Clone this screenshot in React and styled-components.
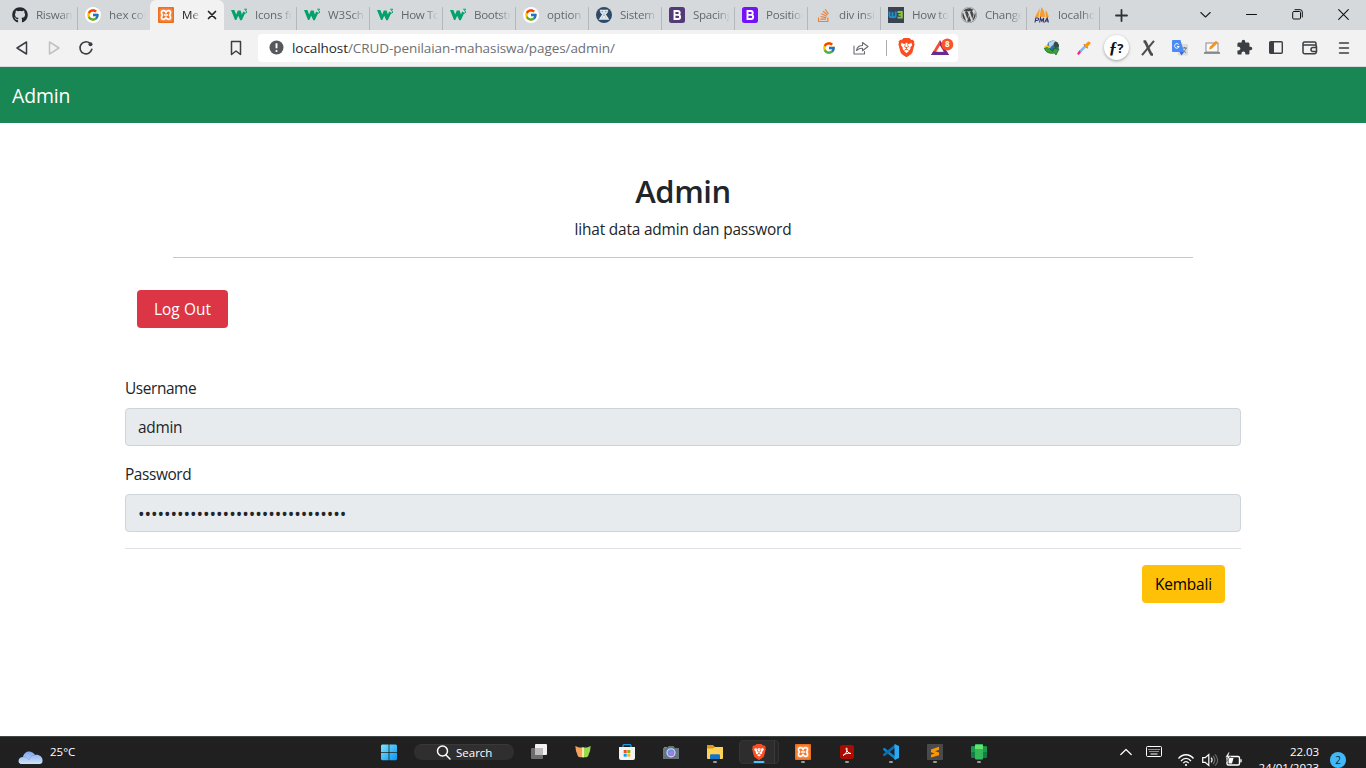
import React from "react";
import styled, { createGlobalStyle } from "styled-components";
import { FcGoogle } from "react-icons/fc";
import { FaGithub, FaWordpress, FaStackOverflow } from "react-icons/fa";
import { SiBrave } from "react-icons/si";
import { MdExtension } from "react-icons/md";

const Global = createGlobalStyle`
  * { box-sizing: border-box; }
  body { margin: 0; background: #fff; overflow: hidden; }
  svg { display: block; flex: none; }
`;

const Screen = styled.div`
  width: 1366px;
  height: 768px;
  display: flex;
  flex-direction: column;
  overflow: hidden;
  font-family: "Open Sans", "Noto Sans", sans-serif;
  color: #212529;
`;

/* ---------- tab strip ---------- */
const TabStrip = styled.div`
  height: 30px;
  flex: none;
  display: flex;
  padding-left: 5px;
  background: #d5d9dc;
`;

const Tab = styled.div`
  width: 73px;
  height: 30px;
  flex: none;
  display: flex;
  align-items: center;
  padding-left: 7px;
  border-radius: ${(p) => (p.$active ? "6px 6px 0 0" : "0")};
  background: ${(p) =>
    p.$active
      ? "#f2f2f2"
      : p.$edge
        ? "none"
        : "linear-gradient(#b5b8ba, #b5b8ba) right 7px / 1px 23px no-repeat"};
  ${(p) => p.$active && "margin: 0 0 0 -1px; width: 74px; padding-left: 8px;"}
`;

const Favicon = styled.span`
  width: 16px;
  height: 16px;
  flex: none;
  display: flex;
  align-items: center;
  justify-content: center;
`;

const TabTitle = styled.span`
  width: ${(p) => (p.$active ? "18px" : "37px")};
  margin-left: 8px;
  overflow: hidden;
  white-space: nowrap;
  font-size: 11.6px;
  line-height: 18px;
  letter-spacing: ${(p) => p.$ls || 0}px;
  color: ${(p) => (p.$active ? "#222" : "#63686c")};
  mask-image: linear-gradient(to right, #000 ${(p) => (p.$active ? "55%" : "65%")}, transparent);
`;

const CloseTab = styled.span`
  margin-left: 7px;
`;

const WindowButton = styled.div`
  width: 46px;
  height: 30px;
  display: flex;
  align-items: center;
  justify-content: center;
`;

const WindowButtons = styled.div`
  height: 28px;
  display: flex;
  align-items: center;
  margin-left: auto;
`;

const NewTab = styled.div`
  width: 43px;
  display: flex;
  align-items: center;
  justify-content: center;
`;

/* ---------- toolbar ---------- */
const Toolbar = styled.div`
  height: 37px;
  flex: none;
  display: flex;
  align-items: center;
  padding: 0 6px 1px;
  background: #f2f2f2;
  border-bottom: 1px solid #d8dadb;
`;

const ToolButton = styled.div`
  width: ${(p) => p.$w || 32}px;
  height: 32px;
  flex: none;
  display: flex;
  align-items: center;
  justify-content: center;
`;

const BookmarkButton = styled(ToolButton)`
  margin-left: 118px;
`;

const RewardsButton = styled(ToolButton)`
  padding-left: 6px;
`;

const AddressBar = styled.div`
  width: 700px;
  height: 28px;
  margin-left: 6px;
  padding-left: 11px;
  display: flex;
  align-items: center;
  background: #fff;
  border-radius: 4px;
`;

const Url = styled.span`
  flex: 1;
  margin-left: 8px;
  white-space: nowrap;
  font-size: 13.5px;
  letter-spacing: -0.07px;
  color: #6c7074;
  b { font-weight: 400; color: #25282b; }
`;

const Divider = styled.span`
  width: 1px;
  height: 16px;
  margin: 0 3px 0 9px;
  background: #aaadb0;
`;

const Extensions = styled.div`
  display: flex;
  margin-left: auto;
`;

const RoundBadge = styled.div`
  width: 25px;
  height: 25px;
  border-radius: 50%;
  background: #fff;
  box-shadow: 0 1px 3px rgba(0, 0, 0, 0.35);
  display: flex;
  align-items: center;
  justify-content: center;
  font: italic 700 17px/24px "Liberation Serif", serif;
  color: #111;
  span { font: 700 13px/24px "Open Sans", sans-serif; }
`;

/* ---------- page ---------- */
const Navbar = styled.nav`
  height: 56px;
  flex: none;
  padding-left: 12px;
  background: #198754;
  color: #fff;
  font-size: 19.4px;
  line-height: 58px;
  letter-spacing: ${(p) => p.$ls}px;
`;

const Page = styled.main`
  height: 613px;
  flex: none;
  display: flex;
  flex-direction: column;
  align-items: center;
  font-size: 15.4px;
`;

const Title = styled.h2`
  margin: 48px 0 0;
  height: 38px;
  font-size: 31px;
  line-height: 40px;
  font-weight: 600;
  letter-spacing: ${(p) => p.$ls}px;
`;

const Subtitle = styled.p`
  margin: 8px 0 0;
  height: 24px;
  line-height: 25px;
  letter-spacing: ${(p) => p.$ls}px;
`;

const TitleRule = styled.div`
  width: 1020px;
  height: 1px;
  margin-top: 16px;
  background: #c7c8c9;
`;

const Content = styled.section`
  width: 1116px;
  display: flex;
  flex-direction: column;
`;

const Button = styled.button`
  width: ${(p) => p.$w}px;
  height: 38px;
  padding: 0;
  border: 0;
  border-radius: 4px;
  font: inherit;
  letter-spacing: ${(p) => p.$ls}px;
  color: ${(p) => p.$color};
  background: ${(p) => p.$bg};
`;

const LogoutRow = styled.div`
  margin: 32px 0 48px 12px;
  height: 38px;
`;

const Label = styled.label`
  height: 24px;
  line-height: 26px;
  margin-bottom: 8px;
  letter-spacing: ${(p) => p.$ls}px;
`;

const Field = styled.div`
  height: 38px;
  margin-bottom: 16px;
  padding-left: 12px;
  line-height: 38px;
  border: 1px solid #ced4da;
  border-radius: 4px;
  background: #e8ebee;
  letter-spacing: ${(p) => p.$ls}px;
`;

const PasswordField = styled(Field)`
  font-size: 17.5px;
`;

const FooterRow = styled.div`
  display: flex;
  justify-content: flex-end;
  padding: 16px 16px 0 0;
  border-top: 1px solid #dee2e6;
`;

/* ---------- taskbar ---------- */
const Taskbar = styled.footer`
  height: 32px;
  flex: none;
  display: flex;
  overflow: hidden;
  color: #fff;
  background: #202020;
  border-top: 1px solid #414543;
`;

const Weather = styled.div`
  width: 367px;
  flex: none;
  display: flex;
  padding: 14px 0 0 18px;
  font-size: 11.5px;
  span { margin: -7px 0 0 7px; line-height: 16px; }
`;

const TaskItem = styled.div`
  position: relative;
  width: 44px;
  height: 31px;
  flex: none;
  display: flex;
  justify-content: center;
  padding-top: 7px;
  &::after {
    content: "";
    position: absolute;
    left: 50%;
    top: 23.5px;
    width: ${(p) => (p.$current ? 11 : 4)}px;
    height: 2.5px;
    border-radius: 2px;
    transform: translateX(-50%);
    background: ${(p) => (p.$current ? "#4cc2ff" : "#9a9a9a")};
    display: ${(p) => (p.$running || p.$current ? "block" : "none")};
  }
`;

const CurrentFrame = styled.div`
  width: 40px;
  height: 24px;
  margin: 3px 2px 0;
  border-radius: 4px;
  border: 1px solid #343434;
  background: linear-gradient(90deg, #2d2d2d 34px, #3a3a3a 34px, #3a3a3a 35px, #262626 35px);
  display: flex;
  justify-content: center;
  ${TaskItem} { height: 20px; padding-top: 3px; margin-left: -1px; }
  ${TaskItem}::after { top: 19.5px; }
`;

const SearchPill = styled.div`
  width: 100px;
  height: 16px;
  margin: 7px 3px 0 3px;
  padding-left: 22px;
  display: flex;
  align-items: center;
  gap: 5px;
  border-radius: 8px;
  background: #2f2f2f;
  border-top: 1px solid #393939;
  font-size: 11.5px;
`;

const Tray = styled.div`
  margin-left: auto;
  width: 252px;
  flex: none;
  display: flex;
`;

const TrayIcon = styled.span`
  width: ${(p) => p.$w}px;
  height: 16px;
  flex: none;
  margin-top: ${(p) => p.$top}px;
  display: flex;
  align-items: center;
  justify-content: center;
`;

const Clock = styled.div`
  width: 69px;
  flex: none;
  padding-top: 7px;
  text-align: right;
  font-size: 11.6px;
  line-height: 16px;
  letter-spacing: -0.1px;
`;

const Count = styled.div`
  width: 16px;
  height: 16px;
  flex: none;
  margin: 15px 0 0 11px;
  border-radius: 50%;
  background: #41b9f8;
  color: #10242f;
  font-size: 10px;
  line-height: 16px;
  text-align: center;
`;

/* ---------- drawings ---------- */
const GoogleFav = () => (
  <svg width="16" height="16" viewBox="0 0 16 16">
    <circle cx="8" cy="8" r="8" fill="#fff" />
    <g transform="translate(1.200 1.200)"><FcGoogle size={13.6} /></g>
  </svg>
);

const W3Fav = () => (
  <svg width="17" height="16" viewBox="0 0 17 16">
    <path d="M0 3h3.400l1.800 4.600L6.800 3.500h2.800l1.300 4.100L12.200 4.500l2 1.600-3.400 7.200H9.300L7.200 8.700 5.300 13H4z" fill="#04a26a" />
    <path d="M13.200 2.200h2.500l-1.300 1.500c1.700.1 1.700 2.500-.1 2.500-.7 0-1.100-.3-1.400-.8" fill="none" stroke="#04a26a" />
  </svg>
);

const XamppIcon = () => (
  <svg width="16" height="16" viewBox="0 0 16 16">
    <rect width="16" height="16" rx="1" fill="#ec6f22" />
    <rect x="1.500" y="1.500" width="13" height="13" rx="2" fill="#f58b45" />
    <path d="M3.500 5.500C3.500 2.800 7 3.400 8 5.300 9 3.400 12.500 2.800 12.500 5.500c0 1.300-.8 1.700-.8 2.500s.8 1.200.8 2.500c0 2.700-3.500 2.100-4.500.2-1 1.900-4.500 2.500-4.500-.2 0-1.300.8-1.700.8-2.500s-.8-1.200-.8-2.500z" fill="#f07a30" stroke="#fff" strokeWidth="1.700" />
    <path d="M5.800 8h4.400" stroke="#fff" strokeWidth="1.500" />
  </svg>
);

const BootstrapFav = ({ color }) => (
  <svg width="16" height="16" viewBox="0 0 16 16">
    <rect width="16" height="16" rx="2.500" fill={color} />
    <path d="M5.500 4h3.300a1.900 1.900 0 0 1 0 3.900H5.500zM5.500 7.900h3.600a2.050 2.050 0 0 1 0 4.100H5.500z" fill="none" stroke="#fff" strokeWidth="1.900" />
  </svg>
);

const SistemFav = () => (
  <svg width="16" height="16" viewBox="0 0 16 16">
    <circle cx="8" cy="8" r="8" fill="#2d4b69" />
    <path d="M3.800 3.500h8.400M4.500 4.500l2.500 3-3 4.500h8l-3-4.500 2.500-3" fill="#8ea3b6" stroke="#e4e9ee" strokeWidth="1.500" />
    <circle cx="8" cy="5.300" r="1.400" fill="#e4e9ee" />
    <circle cx="8" cy="10.300" r="1.500" fill="#e4e9ee" />
  </svg>
);

const W3DarkFav = () => (
  <svg width="16" height="16" viewBox="0 0 16 16">
    <rect width="16" height="16" fill="#3b4251" />
    <path d="M1.500 4.500v4.200c0 2 3 2 3 0V5m0 3.700c0 2 3.200 2 3.200 0V4.500" fill="none" stroke="#1893d1" strokeWidth="1.900" />
    <path d="M9.500 5h4.300v5.600H9.500M10.500 7.800h3" fill="none" stroke="#8dc63f" strokeWidth="1.900" />
  </svg>
);

const PmaFav = () => (
  <svg width="16" height="16" viewBox="0 0 16 16">
    <path d="M6 1 4.500 10H1zM7.300 0c2.400 2.500 3.600 6 3.600 10H5.600zM11.500 3c1.800 2 2.800 4.300 3.200 7h-3z" fill="#f89c2a" />
    <path d="M1 15.500l.8-4.500h1.700c1.700 0 1.300 2.500-.4 2.500H1.600M5.600 15.500l.9-4.500 1.200 3 2-3-.5 4.500M10.500 15.500l2.700-4.500 1.200 4.500M11.500 14h2.500" fill="none" stroke="#33356f" strokeWidth="1.100" />
  </svg>
);

const BraveIcon = ({ size }) => (
  <svg width={size} height={size} viewBox="0 0 24 24">
    <path d="M12 1h4l5 4-1 10-4 6-4 3-4-3-4-6L3 5l5-4z" fill="#fb4d20" />
    <path d="M6 6l3 .6L12 6l3 .6L18 6l1.500 3-2.500 4.500-1 2.500-4 3.500L8 16l-1-2.500L4.500 9z" fill="#fff" />
    <SiBrave size={24} color="#fb4d20" />
  </svg>
);

const Line = ({ w = 16, h = 16, d, c = "#3b3f43", sw = 1.4, fill = "none" }) => (
  <svg width={w} height={h} viewBox={`0 0 ${w} ${h}`} fill={fill} stroke={c} strokeWidth={sw} strokeLinejoin="round" strokeLinecap="round">
    <path d={d} />
  </svg>
);

const RewardsIcon = () => (
  <svg width="26" height="20" viewBox="0 0 26 20">
    <path d="M10 2 1 17h4.500L10 9.500z" fill="#f0502f" />
    <path d="M10 2l9 15h-4.500L10 9.500z" fill="#9e1f63" />
    <path d="M1 17h18l-2.200-3.500H3.200z" fill="#662d91" />
    <path d="M10 7.500l3.800 6.300H6.200z" fill="#fff" />
    <circle cx="17.300" cy="6.500" r="6" fill="#fb542b" />
    <text x="17.300" y="9.400" fontSize="8" fontWeight="700" textAnchor="middle" fill="#fff">8</text>
  </svg>
);

const GlobeIcon = () => (
  <svg width="18" height="16" viewBox="0 0 18 16">
    <circle cx="10" cy="6.500" r="6" fill="#2f6fae" />
    <path d="M5.500 3.500C7 .5 11 0 13 1.600 12 4.500 9 5 7 8z" fill="#b4d9ef" />
    <path d="M12 1.500c2.500.5 4 2.500 4 5l-4 1.500-1.500-4z" fill="#3a4a3c" />
    <path d="M1.500 8c2-2 4-1.500 5.300.8L9 11l1.500-.5-.5-2 6 .5-3 6-1.500-2C7 14 2 12.500 1.500 8z" fill="#36a334" stroke="#1b5a22" strokeWidth=".7" />
    <path d="M1.500 7.500c1.700-2.200 4-1.700 5.200.5" fill="none" stroke="#f5c82f" strokeWidth="1.700" />
  </svg>
);

const DropperIcon = () => (
  <svg width="14" height="14" viewBox="0 0 14 14" strokeLinecap="round">
    <path d="M1.500 12.500 3.500 10" stroke="#f32682" strokeWidth="2.400" />
    <path d="m4 9.700 4-4" stroke="#79baf2" strokeWidth="2.400" />
    <path d="m7.300 3.800 3 3" stroke="#f57b13" strokeWidth="1.500" />
    <path d="m9.500 4.500 2.300-2.300" stroke="#ff9709" strokeWidth="3.200" />
  </svg>
);

const TranslateIcon = () => (
  <svg width="16" height="16" viewBox="0 0 16 16">
    <rect x="6" y="4" width="10" height="11.500" rx="1" fill="#dadddf" />
    <path d="M10 8h5M12.500 7v1m1.500 0c-.5 2-2 3.500-3.500 4.500m0-3c1 1.500 2 2.500 3.500 3" stroke="#607d8b" fill="none" />
    <path d="M1 0h7.500l3.500 12H1a1 1 0 0 1-1-1V1a1 1 0 0 1 1-1z" fill="#4b8bf4" />
    <path d="M7.500 12H12l-2.500 3.500z" fill="#3367d6" />
    <path d="M6.700 4.500a2.300 2.300 0 1 0 .4 2H5" stroke="#fff" fill="none" />
  </svg>
);

const LaptopPenIcon = () => (
  <svg width="16" height="15" viewBox="0 0 16 15">
    <rect x="2" y="3" width="12" height="9" fill="#fafafa" stroke="#858a8f" />
    <path d="M0 13h16" stroke="#777c80" strokeWidth="1.600" />
    <path d="m5 9.500.8-2.800L12 .8l2 2-6.200 6z" fill="#f7931e" />
  </svg>
);

const WalletIcon = () => (
  <svg width="16" height="14" viewBox="0 0 16 14" fill="none" stroke="#3b3f43" strokeWidth="1.500">
    <path d="M14 4V2.200A1.300 1.300 0 0 0 12.700 1H2.500A1.600 1.600 0 0 0 1 2.500v8.300A1.700 1.700 0 0 0 2.700 12.700h10a1.600 1.600 0 0 0 1.600-1.600M1 4h11.500a2 2 0 0 1 2 2v4.500H11a2 2 0 0 1 0-4h3.500" />
  </svg>
);

const CloudIcon = () => (
  <svg width="25" height="13" viewBox="0 0 25 13">
    <defs>
      <linearGradient id="cloud" x2="0" y2="1"><stop stopColor="#7da5ec" /><stop offset="1" stopColor="#d2e3fa" /></linearGradient>
    </defs>
    <path d="M5 6C6-.5 14-1.500 17 4c4-1 8 2 7.500 6 0 2-1 3-3 3H3c-4-1-3-7 2-7z" fill="url(#cloud)" />
    <path d="M5 6c3-.5 5 1 6 3 1-3 3-5 6-5" fill="none" stroke="#7299df" strokeWidth=".8" opacity=".7" />
  </svg>
);

const WindowsIcon = () => (
  <svg width="16" height="17" viewBox="0 0 16 17">
    <defs>
      <linearGradient id="win" x2="1" y2="1"><stop stopColor="#7de3fb" /><stop offset="1" stopColor="#0895f5" /></linearGradient>
    </defs>
    <path d="M1 .5h6.600v7.500H0V1.500zM8.400.5H15l1 1v6.500H8.400zM0 8.800h7.600v7.500H1l-1-1zM8.400 8.800H16v6.500l-1 1H8.400z" fill="url(#win)" />
  </svg>
);

const TaskViewIcon = () => (
  <svg width="16" height="16" viewBox="0 0 16 16">
    <rect x="0" y="4" width="12" height="11" rx="1" fill="#6d6d6d" />
    <rect x="4" y="0" width="12" height="11" rx="1" fill="#f2f2f2" />
    <path d="M4 4h8v7H4z" fill="#bcbcbc" />
  </svg>
);

const CatIcon = () => (
  <svg width="16" height="15" viewBox="0 0 16 15">
    <path d="M.3 2 4 3.500h4v9.800H5Q2.500 13 2.200 10L1 7z" fill="#f5a35c" />
    <path d="M15.700 2 12 3.500H8v9.800h3q2.500-.3 2.800-3.300L15 7z" fill="#9bd84c" />
    <path d="M7 3.500h2v9.800H7z" fill="#f8ecaa" />
  </svg>
);

const StoreIcon = () => (
  <svg width="16" height="16" viewBox="0 0 16 16">
    <path d="M4 4V1.700a1 1 0 0 1 1-1h6a1 1 0 0 1 1 1V4" fill="none" stroke="#1e9be8" strokeWidth="1.300" />
    <path d="M0 3h16v11a2 2 0 0 1-2 2H2a2 2 0 0 1-2-2z" fill="#f3f3f3" />
    <path d="M4.700 6h3v3h-3z" fill="#f25022" /><path d="M8.300 6h3v3h-3z" fill="#7fba00" />
    <path d="M4.700 9.700h3v3h-3z" fill="#00a4ef" /><path d="M8.300 9.700h3v3h-3z" fill="#ffb900" />
  </svg>
);

const CameraIcon = () => (
  <svg width="16" height="16" viewBox="0 0 16 16">
    <path d="M0 4h4l1.500-2h5L12 4h4v11H0z" fill="#68737e" />
    <path d="M1 3h3v1H1z" fill="#2aa6ea" />
    <circle cx="8" cy="8.800" r="4.600" fill="#d6dce8" />
    <circle cx="8" cy="8.800" r="3.500" fill="#6590e8" />
    <circle cx="8.500" cy="9.300" r="2" fill="#a77bea" />
  </svg>
);

const FolderIcon = () => (
  <svg width="16" height="16" viewBox="0 0 16 16">
    <path d="M0 1h6l2 2h8v5H0z" fill="#d99a17" />
    <path d="M0 4.500h6L8 3h8v11a1 1 0 0 1-1 1H1a1 1 0 0 1-1-1z" fill="#ffd257" />
    <path d="M3 15v-3.500a1.200 1.200 0 0 1 1.200-1.200h7.600a1.200 1.200 0 0 1 1.200 1.200V15z" fill="#1275c9" />
  </svg>
);

const AcrobatIcon = () => (
  <svg width="16" height="16" viewBox="0 0 16 16">
    <rect x="1" y="1" width="14" height="14" rx="2.500" fill="#ae0b00" />
    <path d="M4 11.500c2.500-1 4.500-4.500 4-7-.3-1.200-1.200-.5-.8.800.7 2.200 2.500 4 4.800 4.200M4 11.500c1.700-1.700 4.500-2.700 8-2" fill="none" stroke="#fff" strokeWidth="1" />
  </svg>
);

const VsCodeIcon = () => (
  <svg width="16" height="16" viewBox="0 0 16 16">
    <path d="M1.300 5.200 12.200 14" stroke="#0a84cc" strokeWidth="2.600" strokeLinecap="round" />
    <path d="M1.300 10.800 12.200 2" stroke="#0a6db5" strokeWidth="2.600" strokeLinecap="round" />
    <path d="M11.500 0 16 2v12l-4.500 2z" fill="#2aa8f2" />
  </svg>
);

const SublimeIcon = () => (
  <svg width="16" height="16" viewBox="0 0 16 16">
    <rect width="16" height="16" rx="1" fill="#4a4a4a" />
    <path d="M4 5.500 12 2.800v3L8 7.200l4 1.300v2.800L4 13.500v-2.800l3.800-1.200L4 8.300z" fill="#ff9800" />
  </svg>
);

const GreenAppIcon = () => (
  <svg width="16" height="16" viewBox="0 0 16 16">
    <rect y="2" width="16" height="12" rx="1" fill="#118043" />
    <path d="M0 2.500h4V8H0zM12 2.500h4V8h-4z" fill="#1e9a4e" />
    <rect x="4" y="0" width="8" height="15.500" rx="1" fill="#33b85a" />
    <path d="M4 1h8v4H4z" fill="#65e36d" />
  </svg>
);

const WifiIcon = () => (
  <svg width="16" height="14" viewBox="0 0 16 14" fill="none" stroke="#fff" strokeWidth="1.300">
    <path d="M.5 5.500c4-5 11-5 15 0M3 8c3-3.500 7-3.500 10 0M5.300 10.200c1.600-2 3.800-2 5.400 0" />
    <circle cx="8" cy="12" r="1.100" fill="#fff" stroke="none" />
  </svg>
);

const SpeakerIcon = () => (
  <svg width="16" height="14" viewBox="0 0 16 14" fill="none" stroke="#fff" strokeWidth="1.200">
    <path d="M.7 4.700h2.500L6.800 1.500v11L3.200 9.300H.7zM9 4.700c1.200 1.300 1.200 3.300 0 4.600" />
    <path d="M11 3c2.300 2.500 2.300 5.500 0 8M13 1.300c3.300 3.500 3.300 8 0 11.400" stroke="#6a6a6a" />
  </svg>
);

const BatteryIcon = () => (
  <svg width="17" height="15" viewBox="0 0 17 15">
    <rect x="2" y="4.500" width="12.500" height="8.500" rx="1.500" fill="none" stroke="#fff" strokeWidth="1.400" />
    <path d="M3.500 6h5L7 11.500H3.500zM15.300 7.300h1.400v3h-1.400z" fill="#fff" />
    <path d="M3.700 0 .2 5.200h2.300L1.500 9.500l4.300-5.700H3.500L4.700 0z" fill="#fff" stroke="#202020" strokeWidth=".5" />
  </svg>
);

const KeyboardIcon = () => (
  <svg width="16" height="11" viewBox="0 0 16 11" fill="none" stroke="#fff">
    <rect x=".5" y=".5" width="15" height="10" rx="1" />
    <path d="M2.500 3.500h11M3.500 5.500h9" strokeDasharray="1 1" />
    <path d="M4.500 8h7" />
  </svg>
);

const tabs = [
  { title: "Riswan", icon: <FaGithub size={16} color="#24292e" />, ls: -0.3 },
  { title: "hex col", icon: <GoogleFav />, edge: true, ls: -0.1 },
  { title: "Men", icon: <XamppIcon />, active: true },
  { title: "Icons fr", icon: <W3Fav />, ls: -0.25 },
  { title: "W3Sch", icon: <W3Fav />, ls: -0.1 },
  { title: "How To", icon: <W3Fav />, ls: -0.4 },
  { title: "Bootstr", icon: <W3Fav />, ls: -0.3 },
  { title: "option", icon: <GoogleFav />, ls: -0.15 },
  { title: "Sistem", icon: <SistemFav />, ls: -0.25 },
  { title: "Spacing", icon: <BootstrapFav color="#533b78" />, ls: -0.3 },
  { title: "Position", icon: <BootstrapFav color="#7512f9" />, ls: -0.25 },
  { title: "div insi", icon: <FaStackOverflow size={15} color="#ee8137" />, ls: -0.2 },
  { title: "How to", icon: <W3DarkFav />, ls: -0.3 },
  { title: "Change", icon: <FaWordpress size={16} color="#464646" />, ls: -0.3 },
  { title: "localho", icon: <PmaFav />, ls: -0.15 },
];

function Browser() {
  return (
    <>
      <TabStrip>
        {tabs.map((t, i) => (
          <Tab key={i} $active={t.active} $edge={t.edge}>
            <Favicon>{t.icon}</Favicon>
            <TabTitle $active={t.active} $ls={t.ls}>{t.title}</TabTitle>
            {t.active && (
              <CloseTab>
                <Line w={10} h={10} d="M1.500 1.500l7 7M8.500 1.500l-7 7" c="#222" sw={1.700} />
              </CloseTab>
            )}
          </Tab>
        ))}
        <NewTab>
          <Line w={13} h={13} d="M6.500 1v11M1 6.500h11" c="#2f3336" sw={1.800} />
        </NewTab>
        <WindowButtons>
          <WindowButton><Line w={11} h={11} d="M.8 3.500l4.700 4.500 4.700-4.500" c="#222" sw={1.100} /></WindowButton>
          <WindowButton><Line w={11} h={11} d="M.5 5.500h10" c="#111" sw={1} /></WindowButton>
          <WindowButton><Line w={11} h={11} d="M2 2.500h5.500a1 1 0 0 1 1 1V9a1 1 0 0 1-1 1H1.700a1 1 0 0 1-1-1V3.500a1 1 0 0 1 1-1M3 .7h5a2.300 2.300 0 0 1 2.300 2.300v5" c="#111" sw={1} /></WindowButton>
          <WindowButton><Line w={11} h={11} d="M.7.7l9.600 9.600M10.300.7.7 10.300" c="#111" sw={1.100} /></WindowButton>
        </WindowButtons>
      </TabStrip>
      <Toolbar>
        <ToolButton><Line w={14} h={16} d="M11.500 2v12L2 8z" sw={1.500} /></ToolButton>
        <ToolButton><Line w={14} h={16} d="M2.500 2v12L12 8z" c="#bfc1c3" sw={1.500} /></ToolButton>
        <ToolButton>
          <svg width="16" height="16" viewBox="0 0 16 16" fill="none" stroke="#3b3f43" strokeWidth="1.600" strokeLinecap="round">
            <path d="M11.800 3.200A6 6 0 1 0 13.800 9.300" />
            <circle cx="12.500" cy="4.200" r="2" fill="#3b3f43" stroke="none" />
          </svg>
        </ToolButton>
        <BookmarkButton><Line w={12} h={16} d="M1.500 1.500h9v13L6 11l-4.500 3.500z" sw={1.500} /></BookmarkButton>
        <AddressBar>
          <svg width="15" height="15" viewBox="0 0 15 15">
            <circle cx="7.500" cy="7.500" r="7" fill="#55595e" />
            <path d="M7.500 3.300v5" stroke="#fff" strokeWidth="1.900" />
            <circle cx="7.500" cy="11" r="1.100" fill="#fff" />
          </svg>
          <Url><b>localhost</b>/CRUD-penilaian-mahasiswa/pages/admin/</Url>
          <ToolButton><FcGoogle size={14} /></ToolButton>
          <ToolButton><Line w={16} h={14} d="M1 5v8h10.500v-2.500M3.500 9.500c.5-3 2.500-5 6-5V1.500l5.500 4-5.500 4.300V7.200c-2.500-.2-4 .5-6 2.300z" c="#686c70" sw={1.100} /></ToolButton>
          <Divider />
          <ToolButton><BraveIcon size={19} /></ToolButton>
          <RewardsButton $w={36}><RewardsIcon /></RewardsButton>
        </AddressBar>
        <Extensions>
          <ToolButton><GlobeIcon /></ToolButton>
          <ToolButton><DropperIcon /></ToolButton>
          <ToolButton><RoundBadge>ƒ<span>?</span></RoundBadge></ToolButton>
          <ToolButton>
            <svg width="14" height="16" viewBox="0 0 14 16" stroke="#4c4c4c">
              <path d="M13 .8 1 15.200" strokeWidth="2" />
              <path d="M2.500 1.500h1.500c2.500 4 4 9.500 6.500 13h1.500" strokeWidth="2.700" fill="none" />
            </svg>
          </ToolButton>
          <ToolButton><TranslateIcon /></ToolButton>
          <ToolButton><LaptopPenIcon /></ToolButton>
          <ToolButton><MdExtension size={17} color="#3b3f43" /></ToolButton>
          <ToolButton>
            <svg width="14" height="13" viewBox="0 0 14 13">
              <rect x=".7" y=".7" width="12.600" height="11.600" rx="1" fill="none" stroke="#3b3f43" strokeWidth="1.400" />
              <path d="M1 1h4v11H1z" fill="#3b3f43" />
            </svg>
          </ToolButton>
          <ToolButton $w={36}><WalletIcon /></ToolButton>
          <ToolButton><Line w={12} h={14} d="M1.500 2h9M1.500 7h9M1.500 12h9" sw={1.400} /></ToolButton>
        </Extensions>
      </Toolbar>
    </>
  );
}

function AdminPage() {
  return (
    <>
      <Navbar $ls={-0.1}>Admin</Navbar>
      <Page>
        <Title $ls={-0.4}>Admin</Title>
        <Subtitle $ls={-0.17}>lihat data admin dan password</Subtitle>
        <TitleRule />
        <Content>
          <LogoutRow>
            <Button $w={91} $bg="#dc3545" $color="#fff" $ls={0.1}>Log Out</Button>
          </LogoutRow>
          <Label $ls={-0.4}>Username</Label>
          <Field $ls={-0.25}>admin</Field>
          <Label $ls={-0.4}>Password</Label>
          <PasswordField $ls={-0.07}>{"•".repeat(32)}</PasswordField>
          <FooterRow>
            <Button $w={83} $bg="#ffc107" $color="#000" $ls={-0.15}>Kembali</Button>
          </FooterRow>
        </Content>
      </Page>
    </>
  );
}

function DesktopBar() {
  return (
    <Taskbar>
      <Weather><CloudIcon /><span>25°C</span></Weather>
      <TaskItem><WindowsIcon /></TaskItem>
      <SearchPill>
        <Line w={15} h={15} d="M10 10l4 4M11.500 6a5 5 0 1 1-10 0 5 5 0 0 1 10 0" c="#fff" sw={1.500} />
        Search
      </SearchPill>
      <TaskItem><TaskViewIcon /></TaskItem>
      <TaskItem><CatIcon /></TaskItem>
      <TaskItem><StoreIcon /></TaskItem>
      <TaskItem><CameraIcon /></TaskItem>
      <TaskItem $running><FolderIcon /></TaskItem>
      <CurrentFrame><TaskItem $current><BraveIcon size={16} /></TaskItem></CurrentFrame>
      <TaskItem $running><XamppIcon /></TaskItem>
      <TaskItem $running><AcrobatIcon /></TaskItem>
      <TaskItem $running><VsCodeIcon /></TaskItem>
      <TaskItem $running><SublimeIcon /></TaskItem>
      <TaskItem $running><GreenAppIcon /></TaskItem>
      <Tray>
        <TrayIcon $w={24} $top={7}><Line w={12} h={8} d="M.8 6.500 6 1.500l5.200 5" c="#fff" sw={1.200} /></TrayIcon>
        <TrayIcon $w={32} $top={6}><KeyboardIcon /></TrayIcon>
        <TrayIcon $w={32} $top={15}><WifiIcon /></TrayIcon>
        <TrayIcon $w={15} $top={15}><SpeakerIcon /></TrayIcon>
        <TrayIcon $w={33} $top={14}><BatteryIcon /></TrayIcon>
        <Clock>22.03<br />24/01/2023</Clock>
        <Count>2</Count>
      </Tray>
    </Taskbar>
  );
}

export default function App() {
  return (
    <Screen>
      <Global />
      <Browser />
      <AdminPage />
      <DesktopBar />
    </Screen>
  );
}
